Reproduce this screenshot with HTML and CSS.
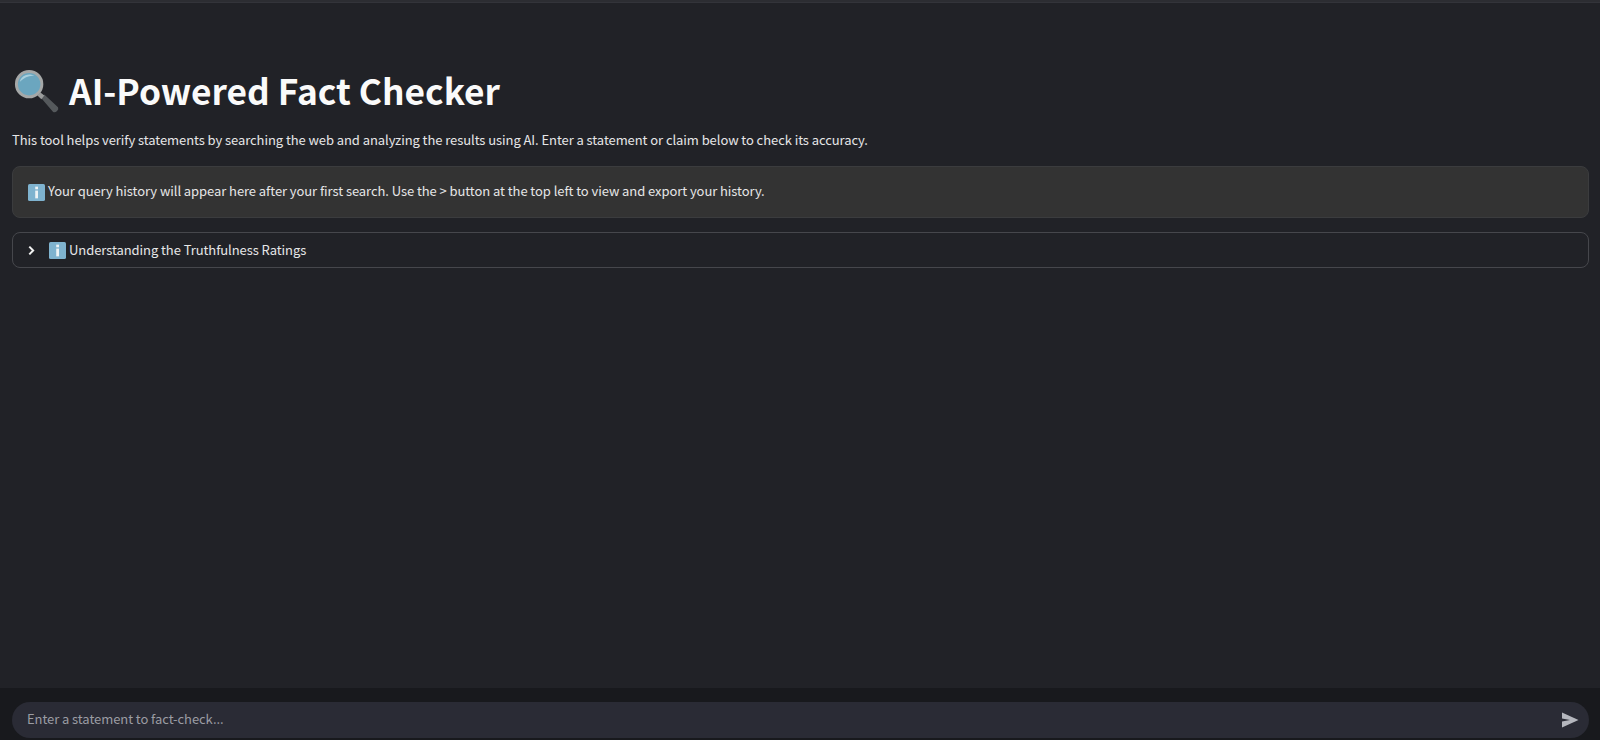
FILE: index.html
```html
<!DOCTYPE html>
<html lang="en">

<head>
  <meta charset="UTF-8">
  <title>AI-Powered Fact Checker</title>
  <link rel="stylesheet" href="styles.css">
</head>

<body>
  <div class="top-line"></div>
  <main class="content">
    <h1 class="title">
      <svg class="title-icon" viewBox="0 0 48 48" aria-hidden="true">
        <path d="M30 32l3-4 14 13q1 2-1 4t-4 1z" fill="#55595c"/>
        <path d="M26 29l3-3 4 3-3 4z" fill="#9a9c9c"/>
        <circle cx="17.500" cy="17.500" r="13" fill="#6ba6bf" stroke="#a5a8a8" stroke-width="3"/>
        <path d="M8 15a10 9 0 0 1 15-6q-8-1-15 6z" fill="#a9d0de"/>
      </svg>
      AI-Powered Fact Checker
    </h1>
    <p class="intro">This tool helps verify statements by searching the web and analyzing the results using AI. Enter a statement or claim below to check its accuracy.</p>
    <div class="alert">
      <svg class="info-icon" viewBox="0 0 16 16" aria-hidden="true">
        <rect width="16" height="16" rx="1.500" fill="#7fb3cf"/>
        <rect x="6.800" y="2.500" width="2.600" height="2.500" fill="#eef3f5"/>
        <rect x="6.800" y="6.200" width="2.600" height="7.300" fill="#eef3f5"/>
      </svg>
      <span class="alert-text">Your query history will appear here after your first search. Use the &gt; button at the top left to view and export your history.</span>
    </div>
    <div class="expander">
      <svg class="chevron" viewBox="0 0 10 10" aria-hidden="true">
        <path d="M3 1.500L6.500 5 3 8.500" fill="none" stroke="#f2f2f2" stroke-width="1.800"/>
      </svg>
      <svg class="info-icon" viewBox="0 0 16 16" aria-hidden="true">
        <rect width="16" height="16" rx="1.500" fill="#7fb3cf"/>
        <rect x="6.800" y="2.500" width="2.600" height="2.500" fill="#eef3f5"/>
        <rect x="6.800" y="6.200" width="2.600" height="7.300" fill="#eef3f5"/>
      </svg>
      <span class="expander-text">Understanding the Truthfulness Ratings</span>
    </div>
  </main>
  <footer class="chat-bar">
    <div class="chat-input">
      <span class="placeholder">Enter a statement to fact-check...</span>
      <svg class="send" viewBox="0 0 18 16" aria-hidden="true">
        <path d="M1 0.500L17.500 8 1 15.500 1 9.500 9 8 1 6.500z" fill="#b4b6bd"/>
      </svg>
    </div>
  </footer>
</body>

</html>
```

FILE: styles.css
```css
html,
body {
  height: 100%;
}

body {
  margin: 0;
  background: #212227;
  color: #e6e6e7;
  font-family: "Noto Sans CJK JP", "Noto Sans", sans-serif;
  font-size: 13px;
  letter-spacing: -0.07px;
  display: flex;
  flex-direction: column;
  overflow: hidden;
}

.top-line {
  height: 2px;
  background: #2c2d32;
  border-bottom: 1px solid #33343a;
}

.content {
  flex: 1;
  padding: 0 11px 0 12px;
}

.title {
  display: flex;
  align-items: center;
  gap: 10px;
  margin: 63px 0 0;
  height: 48px;
  font-size: 35.300px;
  font-weight: 700;
  letter-spacing: 0;
  line-height: 48px;
  color: #fafafa;
}

.title-icon {
  width: 47px;
  height: 47px;
  flex: none;
}

.intro {
  margin: 16px 0 0;
  line-height: 20px;
}

.alert {
  display: flex;
  align-items: center;
  gap: 3px;
  margin-top: 16px;
  height: 52px;
  box-sizing: border-box;
  padding: 0 15px;
  background: #333333;
  border: 1px solid #3b3c3e;
  border-radius: 8px;
}

.alert-text {
  margin-bottom: 3px;
}

.expander {
  display: flex;
  align-items: center;
  gap: 3px;
  margin-top: 14px;
  height: 36px;
  box-sizing: border-box;
  padding: 0 15px;
  border: 1px solid #46474c;
  border-radius: 8px;
}

.expander-text {
  margin-bottom: 1px;
}

.info-icon {
  width: 17px;
  height: 17px;
  flex: none;
}

.chevron {
  width: 11px;
  height: 11px;
  flex: none;
  margin: 0 9px 0 -2px;
}

.chat-bar {
  height: 52px;
  box-sizing: border-box;
  padding: 14px 11px 2px 12px;
  background: #18191d;
}

.chat-input {
  display: flex;
  align-items: center;
  justify-content: space-between;
  height: 36px;
  padding: 0 10px 0 15px;
  background: #2a2b35;
  border-radius: 18px;
}

.placeholder {
  color: #9b9ca3;
  margin-bottom: 4px;
}

.send {
  width: 18px;
  height: 16px;
}
```
